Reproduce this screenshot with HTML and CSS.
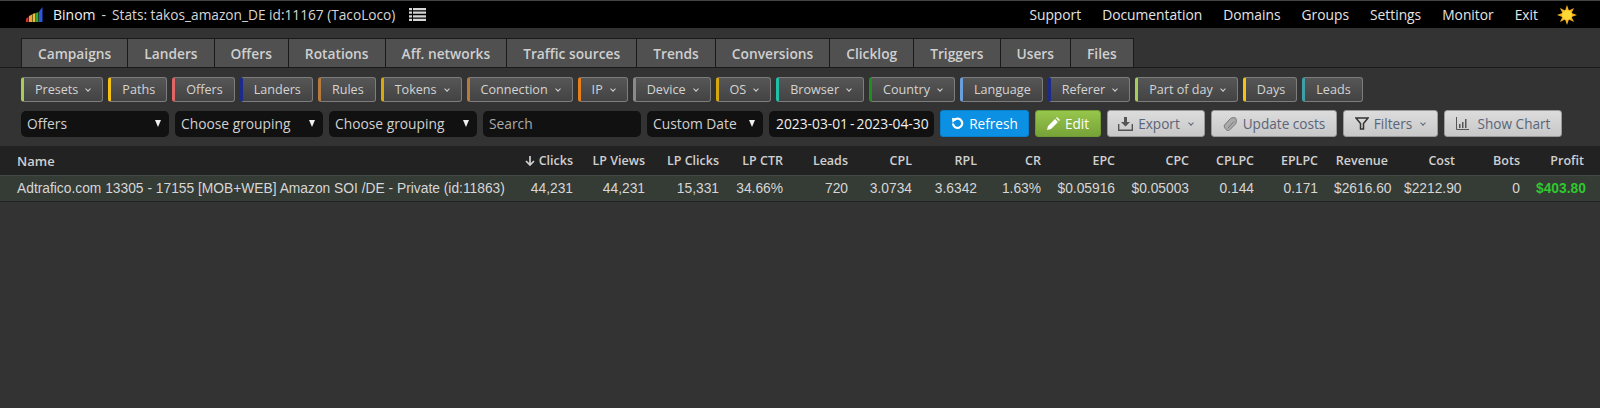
FILE: index.html
```html
<!DOCTYPE html>
<html lang="en">
<head>
    <meta charset="UTF-8">
    <title>Binom - Stats</title>
    <link rel="stylesheet" href="styles.css">
</head>
<body>
    <div class="topbar">
        <div class="brand">
            <svg class="logo" width="17" height="15" viewBox="0 0 17 15">
                <path d="M0 15v-3l2.500-2.500V15z" fill="#d8342a"/>
                <path d="M3 15V9l3-1.500V15z" fill="#f0a040"/>
                <path d="M6.500 15V7l3-1v9z" fill="#e8c030"/>
                <path d="M10 15V6l2.500-1v10z" fill="#35a045"/>
                <path d="M13 15V4.500L16.500 0v15z" fill="#2c55e0"/>
            </svg>
            <span class="brand-name">Binom</span>
            <span class="brand-dash">-</span>
            <span class="brand-title">Stats: takos_amazon_DE id:11167 (TacoLoco)</span>
            <svg class="list-icon" width="17" height="14" viewBox="0 0 17 14">
                <path d="M0 0h3v2.200H0zM4 0h13v2.200H4zM0 3.600h3v2.200H0zM4 3.600h13v2.200H4zM0 7.200h3v2.200H0zM4 7.200h13v2.200H4zM0 10.800h3V13H0zM4 10.800h13V13H4z" fill="#d6d6d6"/>
            </svg>
        </div>
        <nav class="topnav">
            <a>Support</a>
            <a>Documentation</a>
            <a>Domains</a>
            <a>Groups</a>
            <a>Settings</a>
            <a>Monitor</a>
            <a>Exit</a>
            <svg class="sun" width="20" height="20" viewBox="0 0 20 20">
                <path d="M10 0l1.900 5.400 5.200-2.500-2.500 5.200L20 10l-5.400 1.900 2.500 5.200-5.200-2.500L10 20l-1.900-5.400-5.200 2.500 2.500-5.200L0 10l5.400-1.900-2.500-5.200 5.200 2.500z" fill="#f8b020"/>
                <circle cx="10" cy="10" r="5" fill="#fdd835"/>
            </svg>
        </nav>
    </div>

    <div class="tabs">
        <a class="tab">Campaigns</a>
        <a class="tab">Landers</a>
        <a class="tab">Offers</a>
        <a class="tab">Rotations</a>
        <a class="tab">Aff. networks</a>
        <a class="tab">Traffic sources</a>
        <a class="tab">Trends</a>
        <a class="tab">Conversions</a>
        <a class="tab">Clicklog</a>
        <a class="tab">Triggers</a>
        <a class="tab">Users</a>
        <a class="tab">Files</a>
    </div>

    <div class="filters">
        <button class="flt c-lime">Presets<i class="caret"></i></button>
        <button class="flt c-yellow">Paths</button>
        <button class="flt c-red">Offers</button>
        <button class="flt c-navy">Landers</button>
        <button class="flt c-brown">Rules</button>
        <button class="flt c-gold">Tokens<i class="caret"></i></button>
        <button class="flt c-brown">Connection<i class="caret"></i></button>
        <button class="flt c-orange">IP<i class="caret"></i></button>
        <button class="flt c-grey">Device<i class="caret"></i></button>
        <button class="flt c-gold">OS<i class="caret"></i></button>
        <button class="flt c-teal">Browser<i class="caret"></i></button>
        <button class="flt c-green">Country<i class="caret"></i></button>
        <button class="flt c-blue">Language</button>
        <button class="flt c-navy">Referer<i class="caret"></i></button>
        <button class="flt c-lime">Part of day<i class="caret"></i></button>
        <button class="flt c-yellow">Days</button>
        <button class="flt c-cyan">Leads</button>
    </div>

    <div class="toolbar">
        <div class="sel w-group">Offers<i class="arrow"></i></div>
        <div class="sel w-group">Choose grouping<i class="arrow"></i></div>
        <div class="sel w-group">Choose grouping<i class="arrow"></i></div>
        <div class="sel w-search">Search</div>
        <div class="sel w-date">Custom Date<i class="arrow"></i></div>
        <div class="sel w-range">2023-03-01 - 2023-04-30</div>
        <button class="btn btn-blue w-refresh">
            <svg width="13" height="13" viewBox="0 0 13 13"><path d="M3.200 3.200A4.600 4.600 0 1 1 2 6.500" fill="none" stroke="#fff" stroke-width="2.200"/><path d="M1 1l5 .5L1.500 6z" fill="#fff"/></svg>
            Refresh
        </button>
        <button class="btn btn-green w-edit">
            <svg width="13" height="13" viewBox="0 0 13 13"><path d="M0 13l1-4 7-7 3 3-7 7zM9 1l1-1 3 3-1 1z" fill="#fff"/></svg>
            Edit
        </button>
        <button class="btn btn-light w-export">
            <svg width="15" height="14" viewBox="0 0 15 14"><path d="M6 0h3v5h3L7.500 9.500 3 5h3z" fill="#555"/><path d="M.7 7v6.300h13.600V7" fill="none" stroke="#555" stroke-width="1.400"/></svg>
            Export<i class="caret"></i>
        </button>
        <button class="btn btn-light w-update">
            <svg width="15" height="14" viewBox="0 0 15 14"><path d="M1.500 8l6-6.500c1-1 5-1.200 5.500 0s.5 4.500-.5 5.500l-6 6c-1 1-2.500.5-3.500-.5S.5 9 1.500 8z" fill="#aaa" stroke="#777"/><path d="M4.500 11.500l6.500-7" fill="none" stroke="#777"/></svg>
            Update costs
        </button>
        <button class="btn btn-light w-filters">
            <svg width="14" height="13" viewBox="0 0 14 13"><path d="M1 1h12L8.500 6.500V12h-3V6.500z" fill="none" stroke="#333" stroke-width="1.500"/></svg>
            Filters<i class="caret"></i>
        </button>
        <button class="btn btn-light w-chart">
            <svg width="13" height="13" viewBox="0 0 13 13"><path d="M.5 0v12.500H13" fill="none" stroke="#555"/><path d="M3 7h1.500v4H3zM6 5h1.500v6H6zM9 2h1.500v9H9z" fill="#555"/></svg>
            <span class="chart-label">Show Chart</span>
        </button>
    </div>

    <table class="stats">
        <colgroup>
            <col class="col-name"><col class="col-70"><col class="col-72"><col class="col-74"><col class="col-64"><col class="col-65">
            <col class="col-64"><col class="col-65"><col class="col-64"><col class="col-74"><col class="col-74"><col class="col-65">
            <col class="col-64"><col class="col-70"><col class="col-67"><col class="col-65"><col class="col-64">
        </colgroup>
        <thead>
            <tr>
                <th class="left">Name</th>
                <th><svg class="sort" width="10" height="11" viewBox="0 0 10 11"><path d="M5 1v9M1 6l4 4 4-4" fill="none" stroke="#d0d0d0" stroke-width="1.700"/></svg> Clicks</th>
                <th>LP Views</th>
                <th>LP Clicks</th>
                <th>LP CTR</th>
                <th>Leads</th>
                <th>CPL</th>
                <th>RPL</th>
                <th>CR</th>
                <th>EPC</th>
                <th>CPC</th>
                <th>CPLPC</th>
                <th>EPLPC</th>
                <th>Revenue</th>
                <th>Cost</th>
                <th>Bots</th>
                <th>Profit</th>
            </tr>
        </thead>
        <tbody>
            <tr>
                <td class="left">Adtrafico.com 13305 - 17155 [MOB+WEB] Amazon SOI /DE - Private (id:11863)</td>
                <td>44,231</td>
                <td>44,231</td>
                <td>15,331</td>
                <td>34.66%</td>
                <td>720</td>
                <td>3.0734</td>
                <td>3.6342</td>
                <td>1.63%</td>
                <td>$0.05916</td>
                <td>$0.05003</td>
                <td>0.144</td>
                <td>0.171</td>
                <td>$2616.60</td>
                <td>$2212.90</td>
                <td>0</td>
                <td class="profit">$403.80</td>
            </tr>
        </tbody>
    </table>
</body>
</html>
```

FILE: styles.css
```css
body {
    margin: 0;
    background-color: #333333;
    color: #d8d8d8;
    font-family: "Open Sans", Arial, sans-serif;
    font-size: 14px;
    overflow: hidden;
}

.topbar {
    display: flex;
    justify-content: space-between;
    align-items: center;
    height: 28px;
    padding: 0 23px 0 26px;
    background-color: #000;
    border-top: 1px solid #444;
    box-sizing: border-box;
    color: #d6d6d6;
    font-size: 14px;
}

.brand {
    display: flex;
    align-items: center;
}

.brand-name {
    color: #f0f0f0;
    margin-left: 10px;
}

.brand-dash {
    margin: 0 6px;
}

.brand-title {
    font-size: 13.700px;
}

.list-icon {
    margin-left: 14px;
}

.topnav {
    display: flex;
    align-items: center;
    gap: 21px;
    font-size: 13.800px;
}

.topnav a {
    color: #e4e4e4;
}

.sun {
    margin-left: -2px;
}

.tabs {
    display: flex;
    height: 29px;
    margin-top: 10px;
    padding-left: 21px;
    border-bottom: 1px solid #1a1a1a;
}

.tab {
    display: flex;
    align-items: center;
    padding: 0 16px;
    background-color: #505050;
    border: 1px solid #1a1a1a;
    border-bottom: 0;
    margin-right: -1px;
    color: #cfcfcf;
    font-weight: 600;
    font-size: 13.750px;
}

.filters {
    display: flex;
    gap: 5px;
    margin-top: 9px;
    padding-left: 21px;
}

.flt {
    display: flex;
    align-items: center;
    height: 25px;
    padding: 0 11px;
    background: linear-gradient(#565656, #434343);
    border: 1px solid #7d7d7d;
    border-left-width: 3px;
    border-radius: 3px;
    color: #d4d4d4;
    font-family: inherit;
    font-size: 12.600px;
}

.caret {
    display: inline-block;
    width: 3px;
    height: 3px;
    margin: -2px 1px 0 8px;
    border-right: 1px solid currentColor;
    border-bottom: 1px solid currentColor;
    transform: rotate(45deg);
}

.c-lime { border-left-color: #a8cc5c; }
.c-yellow { border-left-color: #f5c211; }
.c-red { border-left-color: #e06666; }
.c-navy { border-left-color: #1c2a8c; }
.c-brown { border-left-color: #b57a3c; }
.c-gold { border-left-color: #d4a80e; }
.c-orange { border-left-color: #e8801a; }
.c-grey { border-left-color: #8a8a8a; }
.c-teal { border-left-color: #1fbfa8; }
.c-green { border-left-color: #1f8f1f; }
.c-blue { border-left-color: #6a9fdc; }
.c-cyan { border-left-color: #3f9ea8; }

.toolbar {
    display: flex;
    align-items: center;
    gap: 6px;
    height: 27px;
    margin-top: 8px;
    padding-left: 21px;
}

.sel {
    position: relative;
    display: flex;
    align-items: center;
    height: 26px;
    padding: 0 6px;
    box-sizing: border-box;
    background-color: #111;
    border-radius: 5px;
    color: #d0d0d0;
    font-size: 13.800px;
}

.arrow {
    position: absolute;
    right: 8px;
    top: 9px;
    border-left: 3.500px solid transparent;
    border-right: 3.500px solid transparent;
    border-top: 7px solid #f0f0f0;
}

.w-group { width: 148px; }
.w-search { width: 158px; color: #aaa; }
.w-date { width: 116px; }
.w-range { width: 165px; padding-left: 7px; color: #f0f0f0; white-space: nowrap; word-spacing: -1.500px; }
.w-refresh { width: 89px; }
.w-edit { width: 66px; }
.w-export { width: 98px; }
.w-update { width: 126px; }
.w-filters { width: 95px; }
.w-chart { width: 118px; }

.btn {
    display: flex;
    align-items: center;
    justify-content: center;
    gap: 5px;
    height: 27px;
    padding: 0;
    border-radius: 3px;
    font-family: inherit;
    font-size: 13.600px;
}

.btn .caret {
    margin-left: 4px;
}

.btn-blue {
    background-color: #0c90e4;
    border: 1px solid #0a80cc;
    color: #fff;
}

.btn-green {
    background: linear-gradient(#97c64c, #77a338);
    border: 1px solid #6f9a34;
    color: #fff;
}

.btn-light {
    background: linear-gradient(#dcdcdc, #c8c8c8);
    border: 1px solid #9a9a9a;
    color: #5a6478;
}

.chart-label {
    margin-left: 4px;
}

.stats {
    width: 1600px;
    margin-top: 9px;
    table-layout: fixed;
    border-collapse: collapse;
    font-family: "Liberation Sans", Arial, sans-serif;
    font-size: 13.800px;
}

.col-name { width: 519px; }
.col-64 { width: 64px; }
.col-65 { width: 65px; }
.col-67 { width: 67px; }
.col-70 { width: 70px; }
.col-72 { width: 72px; }
.col-74 { width: 74px; }

.stats th {
    height: 29px;
    padding: 0 16px 0 0;
    background-color: #222;
    color: #d0d0d0;
    text-align: right;
    font-family: "Open Sans", Arial, sans-serif;
    font-size: 12.500px;
    font-weight: 600;
    white-space: nowrap;
}

.stats td {
    height: 25px;
    padding: 0 16px 0 0;
    background-color: #353b35;
    border-top: 1px solid #444a44;
    border-bottom: 1px solid #222;
    color: #d6d6d6;
    text-align: right;
    white-space: nowrap;
}

.stats .left {
    padding-left: 17px;
    text-align: left;
}

.stats th.left {
    font-size: 13px;
}

.stats .profit {
    color: #2ec92e;
    font-weight: bold;
}

.sort {
    vertical-align: -1px;
}
```
